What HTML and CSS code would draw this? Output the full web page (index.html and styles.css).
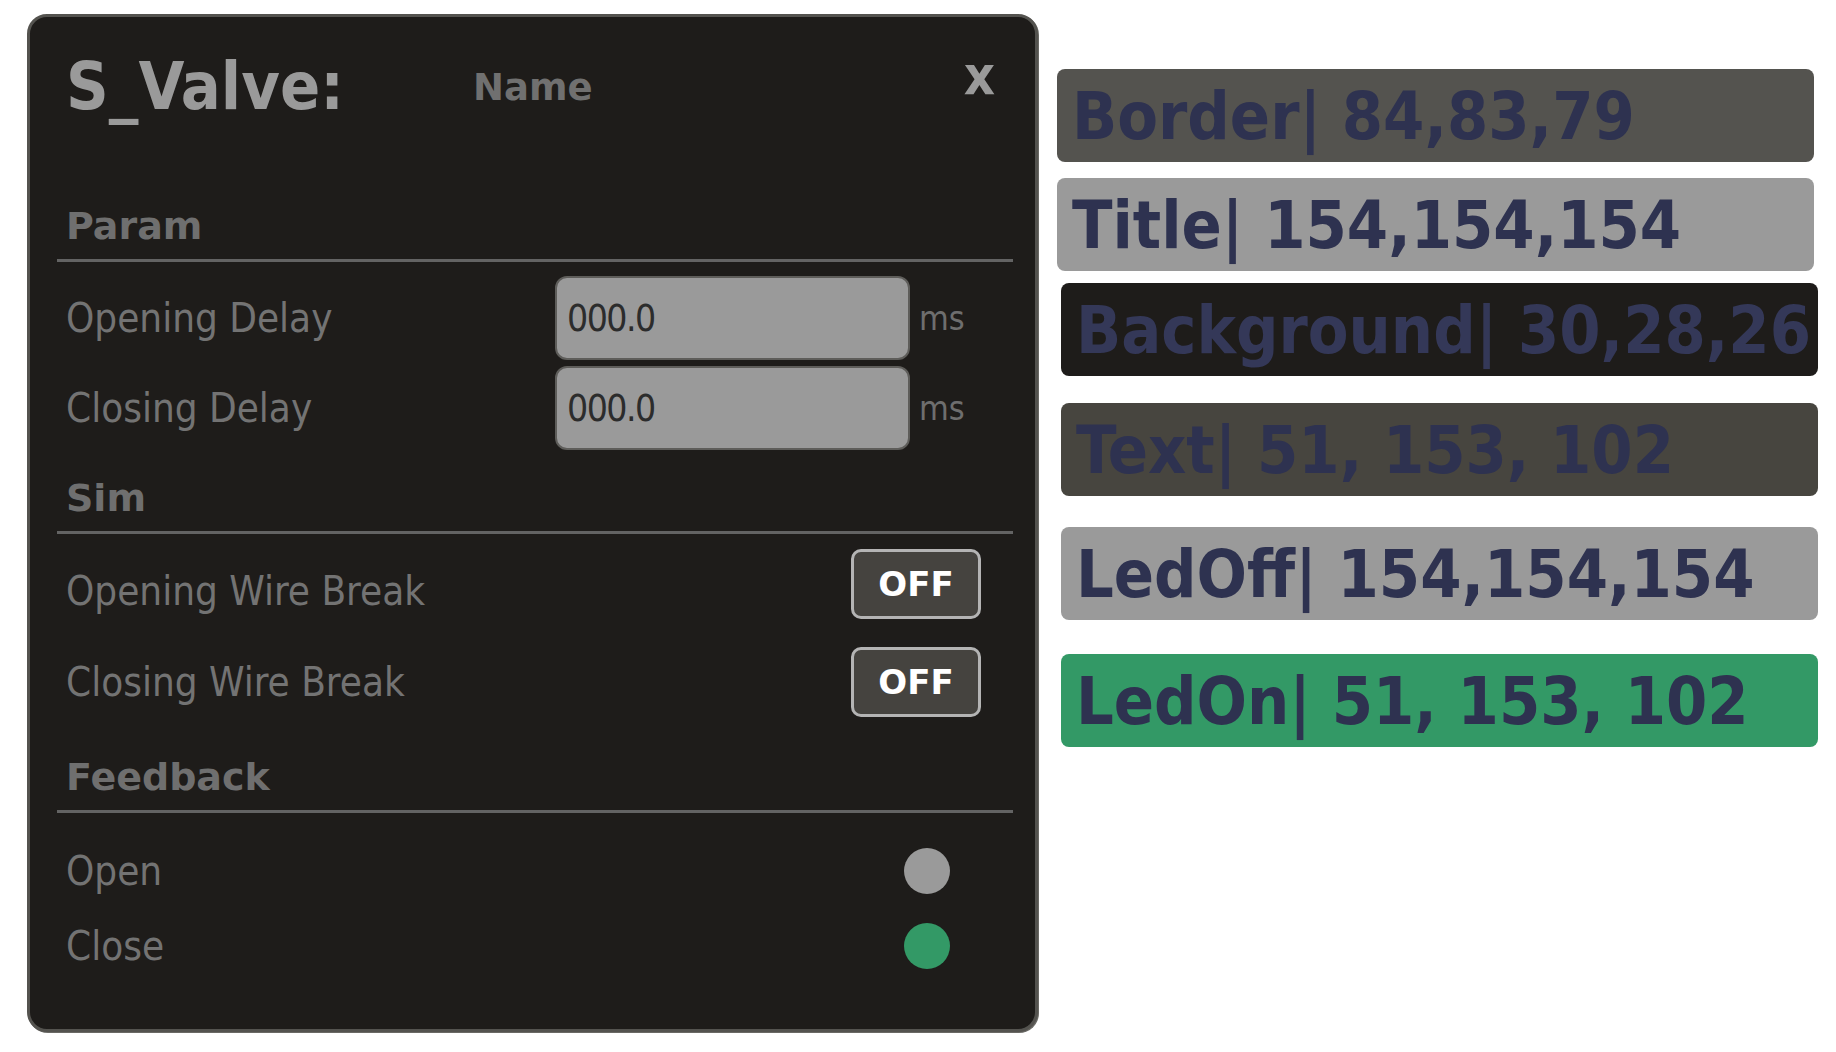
FILE: index.html
```html
<!DOCTYPE html>
<html>
<head>
<meta charset="utf-8">
<link rel="stylesheet" href="styles.css">
</head>
<body>
<div class="page">
  <div class="panel">
    <div class="header">
      <div class="title">S_Valve:</div>
      <div class="name">Name</div>
      <div class="close">x</div>
    </div>

    <div class="section sec-param">Param</div>
    <div class="row row-input row-first">
      <div class="label">Opening Delay</div>
      <div class="field">000.0</div>
      <div class="unit">ms</div>
    </div>
    <div class="row row-input row-second">
      <div class="label">Closing Delay</div>
      <div class="field">000.0</div>
      <div class="unit">ms</div>
    </div>

    <div class="section sec-sim">Sim</div>
    <div class="row row-btn row-first-btn">
      <div class="label label-low">Opening Wire Break</div>
      <div class="toggle">OFF</div>
    </div>
    <div class="row row-btn row-second-btn">
      <div class="label">Closing Wire Break</div>
      <div class="toggle">OFF</div>
    </div>

    <div class="section sec-feedback">Feedback</div>
    <div class="row row-led row-first-led">
      <div class="label">Open</div>
      <div class="led led-off"></div>
    </div>
    <div class="row row-led row-second-led">
      <div class="label">Close</div>
      <div class="led led-on"></div>
    </div>
  </div>

  <div class="swatches">
    <div class="swatch sw-border">Border| 84,83,79</div>
    <div class="swatch sw-title">Title| 154,154,154</div>
    <div class="swatch sw-bg">Background| 30,28,26</div>
    <div class="swatch sw-text">Text| 51, 153, 102</div>
    <div class="swatch sw-ledoff">LedOff| 154,154,154</div>
    <div class="swatch sw-ledon">LedOn| 51, 153, 102</div>
  </div>
</div>
</body>
</html>
```

FILE: styles.css
```css
html, body {
  margin: 0;
  padding: 0;
  background: #ffffff;
}

body {
  width: 1836px;
  height: 1052px;
  overflow: hidden;
  font-family: "DejaVu Sans Condensed", "DejaVu Sans", sans-serif;
  font-stretch: condensed;
}

.page {
  display: flex;
  align-items: flex-start;
  padding: 14px 0 0 27px;
}

/* ---------- panel ---------- */
.panel {
  box-sizing: border-box;
  width: 1011px;
  height: 1018px;
  background: #1e1c1a;
  border: 3px solid #54534f;
  border-radius: 20px;
  box-shadow: 1px 1px 0 #6a6965;
  padding: 37px 22px 0 27px;
  display: flex;
  flex-direction: column;
}

.header {
  display: grid;
  grid-template-columns: 407px 1fr auto;
  align-items: center;
  height: 66px;
  padding: 0 18px 0 9px;
  line-height: 1;
}

.title {
  font-size: 66px;
  font-weight: bold;
  color: #9a9a9a;
}

.name {
  font-family: "DejaVu Sans", sans-serif;
  font-stretch: normal;
  font-size: 37px;
  font-weight: bold;
  color: #707070;
}

.close {
  align-self: start;
  margin-top: -5px;
  font-size: 54px;
  font-weight: bold;
  color: #9a9a9a;
}

.section {
  font-family: "DejaVu Sans", sans-serif;
  font-stretch: normal;
  font-size: 38px;
  font-weight: bold;
  line-height: 1;
  color: #6f6f6f;
  padding: 0 0 14px 9px;
  border-bottom: 3px solid #636363;
}

.sec-param { margin-top: 87px; }
.sec-sim { margin-top: 29px; }
.sec-feedback { margin-top: 41px; }

.row {
  display: flex;
  align-items: center;
  justify-content: space-between;
}

.label {
  padding-left: 9px;
  font-size: 40px;
  line-height: 1;
  color: #737373;
}

.label-low {
  margin-top: 14px;
}

/* input rows */
.row-input {
  display: grid;
  grid-template-columns: 498px 355px auto;
  justify-content: start;
  height: 84px;
}

.row-first { margin-top: 14px; }
.row-second { margin-top: 6px; }

.field {
  box-sizing: border-box;
  height: 84px;
  background: #9a9a9a;
  border: 2px solid #5e5d5a;
  border-radius: 12px;
  padding-left: 10px;
  display: flex;
  align-items: center;
  font-size: 37px;
  letter-spacing: -1.5px;
  line-height: 1;
  color: #2c2c2c;
}

.unit {
  margin-left: 9px;
  font-size: 34px;
  line-height: 1;
  color: #6e6e6e;
}

/* toggle rows */
.row-btn { height: 70px; }
.row-first-btn { margin-top: 15px; }
.row-second-btn { margin-top: 28px; }

.toggle {
  box-sizing: border-box;
  width: 130px;
  height: 70px;
  margin-right: 32px;
  background: #45433f;
  border: 3px solid #b4b4b4;
  border-radius: 10px;
  display: flex;
  align-items: center;
  justify-content: center;
  font-family: "DejaVu Sans", sans-serif;
  font-stretch: normal;
  font-size: 34px;
  font-weight: bold;
  line-height: 1;
  color: #ffffff;
}

/* led rows */
.row-led { height: 46px; }
.row-first-led { margin-top: 35px; }
.row-second-led { margin-top: 29px; }

.led {
  width: 46px;
  height: 46px;
  border-radius: 50%;
  margin-right: 63px;
}

.led-off { background: #9a9a9a; }
.led-on { background: #339966; }

/* ---------- swatches ---------- */
.swatches {
  display: flex;
  flex-direction: column;
  margin: 55px 0 0 19px;
}

.swatch {
  box-sizing: border-box;
  width: 757px;
  height: 93px;
  border-radius: 8px;
  padding: 3px 0 0 15px;
  display: flex;
  align-items: center;
  font-size: 66px;
  font-weight: bold;
  line-height: 1;
  color: #2e3250;
  white-space: pre;
}

.sw-border { background: #54534f; }
.sw-title { background: #9a9a9a; margin-top: 16px; }
.sw-bg { background: #1e1c1a; margin: 12px 0 0 4px; color: #343858; }
.sw-text { background: #47453f; margin: 27px 0 0 4px; }
.sw-ledoff { background: #9a9a9a; margin: 31px 0 0 4px; }
.sw-ledon { background: #339966; margin: 34px 0 0 4px; }
```
